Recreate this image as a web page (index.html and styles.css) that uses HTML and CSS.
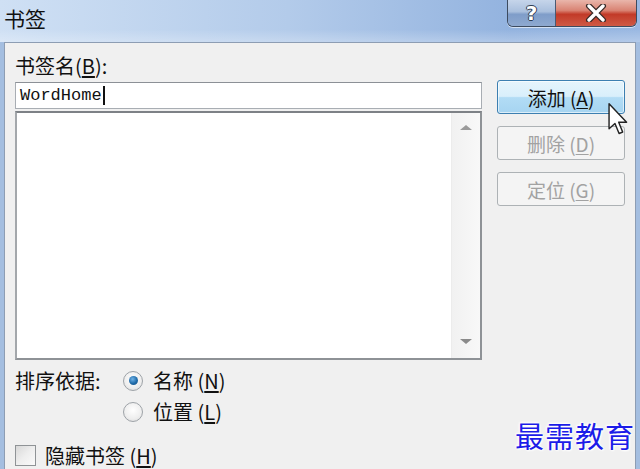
FILE: index.html
```html
<!DOCTYPE html>
<html lang="zh">
<head>
    <meta charset="UTF-8">
    <title>书签</title>
    <link rel="stylesheet" href="styles.css">
</head>
<body>
    <div class="window">
        <div class="titlebar">
            <div class="title">书签</div>
            <div class="caption-buttons">
                <div class="cap-btn help">?</div>
                <div class="cap-btn close">
                    <svg width="24" height="18" viewBox="0 0 24 18">
                        <path d="M5 2 L19 16 M19 2 L5 16" stroke="#3a2a28" stroke-width="6" stroke-linecap="round"/>
                        <path d="M5 2 L19 16 M19 2 L5 16" stroke="#fff" stroke-width="3.4" stroke-linecap="round"/>
                    </svg>
                </div>
            </div>
        </div>
        <div class="frame">
            <div class="panel">
                <div class="left">
                    <div class="field-label">书签名(<u>B</u>):</div>
                    <div class="name-input">WordHome<span class="caret"></span></div>
                    <div class="listbox">
                        <div class="list-area"></div>
                        <div class="scrollbar">
                            <span class="arrow up"></span>
                            <span class="arrow down"></span>
                        </div>
                    </div>
                    <div class="sort-block">
                        <div class="sort-label">排序依据:</div>
                        <div class="radio-group">
                            <div class="radio-row">
                                <span class="radio checked"></span>
                                <span>名称 (<u>N</u>)</span>
                            </div>
                            <div class="radio-row">
                                <span class="radio"></span>
                                <span>位置 (<u>L</u>)</span>
                            </div>
                        </div>
                    </div>
                    <div class="check-row">
                        <span class="checkbox"></span>
                        <span>隐藏书签 (<u>H</u>)</span>
                    </div>
                </div>
                <div class="right">
                    <button class="btn default">添加 (<u>A</u>)</button>
                    <button class="btn" disabled>删除 (<u>D</u>)</button>
                    <button class="btn" disabled>定位 (<u>G</u>)</button>
                </div>
                <svg class="pointer" width="22" height="34" viewBox="0 0 12 19">
                    <path d="M1 1 L1 15 L4.3 12 L6.6 17.6 L8.6 16.8 L6.4 11.3 L10.8 11.3 Z" fill="#fff" stroke="#222" stroke-width="0.8" stroke-linejoin="round"/>
                </svg>
                <div class="watermark">最需教育</div>
            </div>
        </div>
    </div>
</body>
</html>
```

FILE: styles.css
```css
body {
    margin: 0;
    width: 640px;
    height: 469px;
    overflow: hidden;
    font-family: "Noto Sans CJK SC", sans-serif;
    background: #a4bee0;
}
.window {
    width: 640px;
    height: 469px;
    display: flex;
    flex-direction: column;
}
.titlebar {
    height: 42px;
    flex: none;
    display: flex;
    justify-content: space-between;
    align-items: flex-start;
    background: linear-gradient(180deg, rgba(255,255,255,0) 0%, rgba(255,255,255,0) 70%, rgba(255,255,255,0.25) 100%),
                linear-gradient(90deg, #cfe0f4 0%, #b3cbea 45%, #93b3df 80%, #9ab8e2 100%);
}
.title {
    font-size: 21px;
    line-height: 36px;
    padding-left: 4px;
    color: #111;
}
.caption-buttons {
    display: flex;
    margin-right: 3px;
    border: 1px solid #3d4b5f;
    border-top: none;
    border-radius: 0 0 6px 6px;
    overflow: hidden;
    height: 26px;
    box-shadow: 0 1px 0 rgba(255,255,255,0.6);
}
.cap-btn {
    display: flex;
    align-items: center;
    justify-content: center;
    height: 26px;
}
.help {
    width: 47px;
    border-right: 1px solid #4a5a72;
    background: linear-gradient(180deg, #c6d5ea 0%, #a9bfdd 45%, #7f9dc9 55%, #8ea9d0 100%);
    color: #fff;
    font-family: "DejaVu Sans", sans-serif;
    font-weight: bold;
    font-size: 20px;
    text-shadow: 1px 0 0 #2f3d52, -1px 0 0 #2f3d52, 0 1px 0 #2f3d52, 0 -1px 0 #2f3d52;
}
.close {
    width: 80px;
    background: linear-gradient(180deg, #e9b6ab 0%, #d98373 40%, #c23a28 55%, #cf5a45 100%);
}
.frame {
    flex: 1;
    display: flex;
    padding: 0 4px;
    min-height: 0;
}
.panel {
    position: relative;
    flex: 1;
    display: flex;
    gap: 15px;
    padding: 10px 9px 0 10px;
    background: #f0f0f0;
    border: 1px solid #8d9db3;
    border-bottom: none;
    font-size: 20px;
    color: #111;
}
.left {
    width: 467px;
    display: flex;
    flex-direction: column;
}
.field-label {
    line-height: 26px;
    margin-bottom: 3px;
}
u {
    text-underline-offset: 2px;
}
.name-input {
    height: 25px;
    border: 1px solid #a8adb3;
    border-top-color: #8c9096;
    background: #fff;
    font-family: "Liberation Mono", monospace;
    font-size: 17px;
    line-height: 25px;
    padding-left: 4px;
    display: flex;
    align-items: center;
    color: #111;
}
.caret {
    width: 2px;
    height: 19px;
    background: #111;
    margin-left: 1px;
}
.listbox {
    margin-top: 2px;
    height: 249px;
    border: 2px solid #8e9296;
    border-top-color: #7d8186;
    border-left-color: #a3a7ab;
    background: #fff;
    display: flex;
}
.list-area {
    flex: 1;
}
.scrollbar {
    width: 28px;
    background: linear-gradient(90deg, #f1f1f1, #f8f8f8);
    border-left: 1px solid #ececec;
    display: flex;
    flex-direction: column;
    justify-content: space-between;
    align-items: center;
    padding: 12px 0 14px;
}
.arrow {
    width: 0;
    height: 0;
    border-left: 6px solid transparent;
    border-right: 6px solid transparent;
}
.arrow.up {
    border-bottom: 5px solid #9a9a9a;
}
.arrow.down {
    border-top: 5px solid #8a8a8a;
}
.sort-block {
    display: flex;
    margin-top: 5px;
}
.sort-label {
    width: 108px;
    line-height: 31px;
}
.radio-group {
    display: flex;
    flex-direction: column;
}
.radio-row {
    display: flex;
    align-items: center;
    gap: 10px;
    height: 31px;
}
.radio {
    width: 18px;
    height: 18px;
    border-radius: 50%;
    border: 1px solid #9ea3a8;
    background: radial-gradient(circle at 50% 40%, #ffffff 0%, #eeeeee 60%, #d6d6d6 100%);
    display: flex;
    align-items: center;
    justify-content: center;
}
.radio.checked::after {
    content: "";
    width: 9px;
    height: 9px;
    border-radius: 50%;
    background: radial-gradient(circle at 40% 35%, #6fb3e8 0%, #1f6aa8 55%, #174f80 100%);
}
.check-row {
    display: flex;
    align-items: center;
    gap: 9px;
    margin-top: 14px;
    height: 28px;
}
.checkbox {
    width: 19px;
    height: 19px;
    border: 1px solid #8f9396;
    background: linear-gradient(135deg, #d8d8d8 0%, #eeeeee 50%, #fafafa 100%);
}
.right {
    width: 128px;
    display: flex;
    flex-direction: column;
    gap: 12px;
    padding-top: 27px;
}
.btn {
    height: 34px;
    font-family: "Noto Sans CJK SC", sans-serif;
    font-size: 19px;
    border-radius: 3px;
    border: 1px solid #adb2b5;
    background: #f4f4f4;
    color: #a2a2a2;
    padding: 0;
}
.btn.default {
    border-color: #3c7fb1;
    background: linear-gradient(180deg, #e5f4fc 0%, #d9effb 48%, #b2dcf5 52%, #a6d4f1 100%);
    color: #111;
    box-shadow: inset 0 0 0 1px rgba(255,255,255,0.6);
}
.pointer {
    position: absolute;
    left: 602px;
    top: 59px;
}
.watermark {
    position: absolute;
    right: 0;
    bottom: 13px;
    font-size: 29px;
    letter-spacing: 1px;
    color: #1c1ce8;
    text-shadow: 0 0 2px #fff, 0 0 3px #fff, 1px 1px 2px #fff, -1px -1px 2px #fff;
}
```
